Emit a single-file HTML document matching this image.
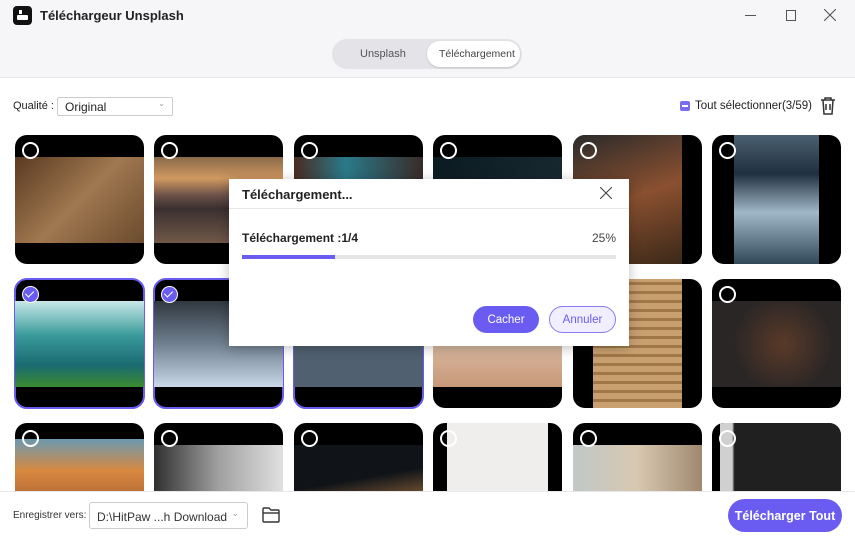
<!DOCTYPE html><html><head><meta charset="utf-8"><style>
*{box-sizing:border-box;margin:0;padding:0}
html,body{width:855px;height:539px;overflow:hidden}
body{background:#fff;font-family:"Liberation Sans",sans-serif;position:relative;font-size:12px;color:#222}
.top{position:absolute;left:0;top:0;width:855px;height:78px;background:#f6f6f8;border-bottom:1px solid #e6e6ea}
.abs{position:absolute}
.card{position:absolute;width:129px;height:129px;border-radius:12px;background:#000;overflow:hidden}
.card .img{position:absolute;left:0;right:0}
.card .c{position:absolute;left:7px;top:7px;width:17px;height:17px;border:2px solid #fff;border-radius:50%}
.sel{outline:2px solid #6a5cf0;outline-offset:-1px}
.sel .c{background:#6a5cf0;border:1.5px solid #fff}
.sel .c::after{content:"";position:absolute;left:4px;top:2px;width:4px;height:7px;border:solid #fff;border-width:0 1.5px 1.5px 0;transform:rotate(45deg)}
.btn{display:flex;align-items:center;justify-content:center}
</style></head><body>
<div class="top"></div>
<div class="abs" style="left:13px;top:6px;width:19px;height:19px;background:#111;border-radius:4px"><div class="abs" style="left:6px;top:4px;width:3px;height:4px;background:#fff"></div><div class="abs" style="left:4px;top:9px;width:11px;height:5px;background:#fff;border-radius:1px"></div></div>
<div class="abs" style="left:40px;top:8px;font-weight:bold;font-size:13px">Téléchargeur Unsplash</div>
<div class="abs" style="left:745px;top:15px;width:11px;height:1px;background:#555"></div>
<div class="abs" style="left:786px;top:10px;width:10px;height:11px;border:1px solid #555"></div>
<svg class="abs" style="left:824px;top:9px" width="12" height="12"><path d="M0 0L12 12M12 0L0 12" stroke="#555" stroke-width="1.1"/></svg>
<div class="abs" style="left:332px;top:39px;width:190px;height:30px;border-radius:15px;background:#e4e4e8"></div>
<div class="abs" style="left:360px;top:48px;font-size:11px;color:#555">Unsplash</div>
<div class="abs" style="left:427px;top:41px;width:93px;height:26px;border-radius:13px;background:#fff;box-shadow:0 1px 2px rgba(0,0,0,.15)"></div>
<div class="abs" style="left:439px;top:48px;font-size:10.5px;color:#444">Téléchargement</div>
<div class="abs" style="left:13px;top:100px;font-size:11px">Qualité :</div>
<div class="abs" style="left:57px;top:97px;width:116px;height:19px;border:1px solid #ccc;border-radius:2px;padding:2px 7px;font-size:12px">Original<span style="position:absolute;right:7px;top:1px;font-size:8px;color:#999">⌄</span></div>
<div class="abs" style="left:680px;top:101px;width:10px;height:10px;background:#7a6cf0;border-radius:2px"><div style="margin:4px 2px;height:2px;background:#fff"></div></div>
<div class="abs" style="left:695px;top:100px;font-size:11.5px">Tout sélectionner(3/59)</div>
<svg class="abs" style="left:819px;top:96px" width="18" height="20" viewBox="0 0 18 20" fill="none" stroke="#333" stroke-width="1.5"><path d="M2 4h14M6 4V2h6v2M4 4l1 14h8l1-14M7 8v6M11 8v6"/></svg>

<div class="card" style="left:15px;top:135px"><div class="img" style="top:22px;height:86px;background:linear-gradient(135deg,#5a3a22,#a07850 50%,#6b4a2e)"></div><div class="c"></div></div>
<div class="card" style="left:154px;top:135px"><div class="img" style="top:22px;height:86px;background:linear-gradient(180deg,#8a6a4a,#d09860 25%,#6a5048 45%,#3a3030 60%,#705848)"></div><div class="c"></div></div>
<div class="card" style="left:294px;top:135px"><div class="img" style="top:22px;height:86px;background:linear-gradient(90deg,#4a2a20,#2a7a8a 40%,#3a2a28)"></div><div class="c"></div></div>
<div class="card" style="left:433px;top:135px"><div class="img" style="top:22px;height:86px;background:linear-gradient(135deg,#0a1a20,#203038)"></div><div class="c"></div></div>
<div class="card" style="left:573px;top:135px"><div class="img" style="top:0;left:0;right:20px;height:129px;background:linear-gradient(160deg,#2a2a2a,#8a5030 50%,#3a2818)"></div><div class="c"></div></div>
<div class="card" style="left:712px;top:135px"><div class="img" style="top:0;left:22px;right:22px;height:129px;background:linear-gradient(180deg,#4a6070,#203040 30%,#a0b8c8 60%,#304858)"></div><div class="c"></div></div>

<div class="card sel" style="left:15px;top:279px"><div class="img" style="top:22px;height:86px;background:linear-gradient(180deg,#c8e8e8,#3a9a9a 40%,#1a6a70 75%,#3a8a30)"></div><div class="c"></div></div>
<div class="card sel" style="left:154px;top:279px"><div class="img" style="top:22px;height:86px;background:linear-gradient(180deg,#303840,#708090 50%,#c8d8e8)"></div><div class="c"></div></div>
<div class="card sel" style="left:294px;top:279px"><div class="img" style="top:22px;height:86px;background:#506070"></div><div class="c"></div></div>
<div class="card" style="left:433px;top:279px"><div class="img" style="top:22px;height:86px;background:linear-gradient(180deg,#e8d8c8,#c89878)"></div><div class="c"></div></div>
<div class="card" style="left:573px;top:279px"><div class="img" style="top:0;left:20px;right:20px;height:129px;background:repeating-linear-gradient(0deg,#c8a070 0 6px,#a07848 6px 9px)"></div><div class="c"></div></div>
<div class="card" style="left:712px;top:279px"><div class="img" style="top:22px;height:86px;background:radial-gradient(circle at 55% 50%,#5a3a28,#2a2626 60%)"></div><div class="c"></div></div>

<div class="card" style="left:15px;top:423px;height:110px"><div class="img" style="top:16px;height:90px;background:linear-gradient(180deg,#6a9ab0,#d88840 35%,#8a4a28)"></div><div class="c"></div></div>
<div class="card" style="left:154px;top:423px;height:110px"><div class="img" style="top:22px;height:90px;background:linear-gradient(90deg,#303030,#a0a0a0 50%,#e0e0e0)"></div><div class="c"></div></div>
<div class="card" style="left:294px;top:423px;height:110px"><div class="img" style="top:22px;height:90px;background:linear-gradient(170deg,#101418 40%,#8a6038 70%,#201818)"></div><div class="c"></div></div>
<div class="card" style="left:433px;top:423px;height:110px"><div class="img" style="top:0;left:14px;right:14px;height:129px;background:#f0eeec"></div><div class="c"></div></div>
<div class="card" style="left:573px;top:423px;height:110px"><div class="img" style="top:22px;height:90px;background:linear-gradient(90deg,#c0c8c8,#d8c8b0 50%,#a08870)"></div><div class="c"></div></div>
<div class="card" style="left:712px;top:423px;height:110px"><div class="img" style="top:0;left:8px;right:0;height:129px;background:linear-gradient(90deg,#d0d0d0 0 10%,#202020 12%)"></div><div class="c"></div></div>

<div class="abs" style="left:0;top:491px;width:855px;height:48px;background:#fff;border-top:1px solid #e8e8ea"></div>
<div class="abs" style="left:13px;top:510px;font-size:10px;color:#333">Enregistrer vers:</div>
<div class="abs" style="left:89px;top:502px;width:159px;height:27px;border:1px solid #ccc;border-radius:3px;padding:7px 7px;font-size:12px;color:#333">D:\HitPaw ...h Download<span style="position:absolute;right:8px;top:5px;font-size:9px;color:#999">⌄</span></div>
<svg class="abs" style="left:261px;top:506px" width="20" height="18" viewBox="0 0 20 18" fill="none" stroke="#333" stroke-width="1.4"><path d="M2 3q0-1 1-1h5l2 2h7q1 0 1 1v10q0 1-1 1H3q-1 0-1-1z"/><path d="M2 7h16"/></svg>
<div class="abs btn" style="left:728px;top:499px;width:114px;height:33px;border-radius:17px;background:#6a5cf0;color:#fff;font-weight:bold;font-size:12.5px">Télécharger Tout</div>

<div class="abs" style="left:229px;top:179px;width:400px;height:167px;background:#fff;box-shadow:0 2px 12px rgba(0,0,0,.25)">
<div class="abs" style="left:13px;top:8px;font-weight:bold;font-size:13px">Téléchargement...</div>
<svg class="abs" style="left:371px;top:8px" width="12" height="12"><path d="M0 0L12 12M12 0L0 12" stroke="#444" stroke-width="1.1"/></svg>
<div class="abs" style="left:0;top:29px;width:400px;height:1px;background:#e8e8e8"></div>
<div class="abs" style="left:13px;top:52px;font-weight:bold;font-size:12px">Téléchargement :1/4</div>
<div class="abs" style="right:13px;top:52px;font-size:12px;color:#444">25%</div>
<div class="abs" style="left:13px;top:76px;width:374px;height:4px;background:#e4e4e6"><div style="width:93px;height:4px;background:#6a5cf0"></div></div>
<div class="abs btn" style="left:244px;top:127px;width:66px;height:27px;border-radius:14px;background:#6a5cf0;color:#fff;font-size:11.5px">Cacher</div>
<div class="abs btn" style="left:320px;top:127px;width:67px;height:27px;border-radius:14px;background:#f0eeff;border:1px solid #8a7cf0;color:#6a5cf0;font-size:11.5px">Annuler</div>
</div>
</body></html>
